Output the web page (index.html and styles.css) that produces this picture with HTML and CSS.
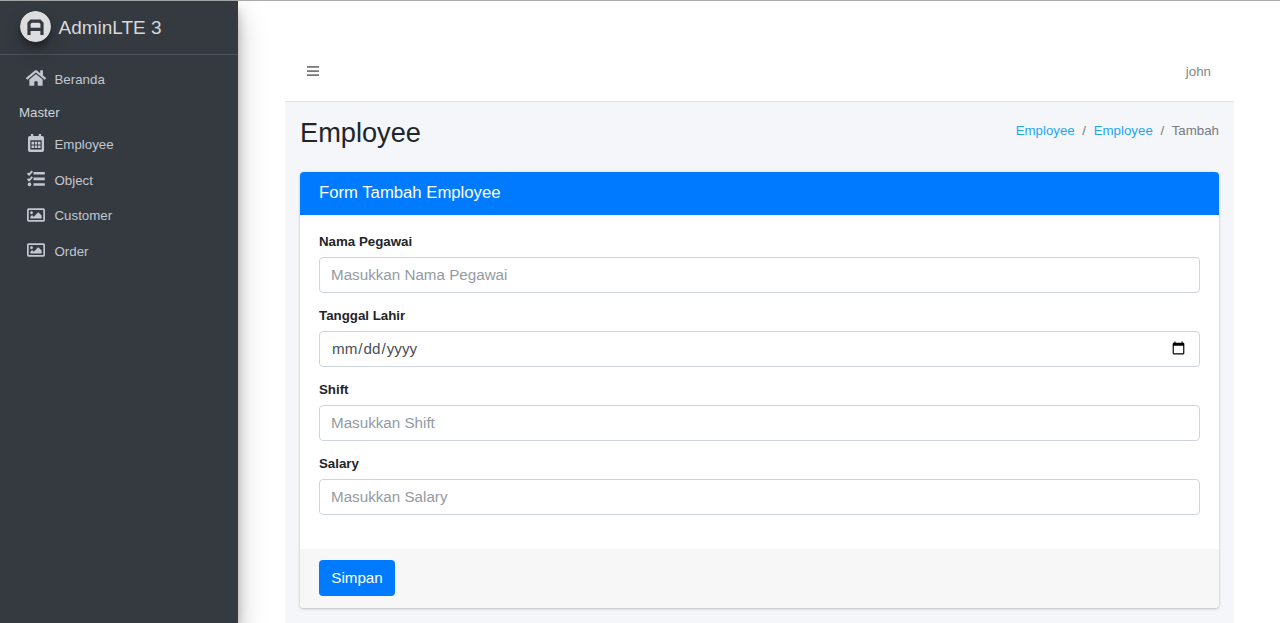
FILE: index.html
```html
<!DOCTYPE html>
<html lang="en">
<head>
<meta charset="utf-8">
<title>AdminLTE 3</title>
<link rel="stylesheet" href="styles.css">
</head>
<body>
<div class="wrapper">
  <aside class="sidebar">
    <a class="brand">
      <svg class="brand-logo" viewBox="0 0 31 31"><circle cx="15.5" cy="15.5" r="15.5" fill="#dcddde"/><path d="M9 24V12.300L11.100 10.200h8.800L22 12.300V24M9 18.300h13" fill="none" stroke="#343a40" stroke-width="3.200"/></svg>
      <span class="brand-text">AdminLTE 3</span>
    </a>
    <nav class="menu">
      <a class="item"><svg class="icon home" viewBox="0 0 576 512"><path d="M280.4 148.3 96 300.1V464a16 16 0 0 0 16 16l112-.3a16 16 0 0 0 16-16V368a16 16 0 0 1 16-16h64a16 16 0 0 1 16 16v95.6a16 16 0 0 0 16 16.1L464 480a16 16 0 0 0 16-16V300L295.7 148.3a12.2 12.2 0 0 0-15.3 0zM571.6 251.500 488 182.600V44a12 12 0 0 0-12-12h-56a12 12 0 0 0-12 12v72.600L318.500 43a48 48 0 0 0-61 0L4.300 251.500a12 12 0 0 0-1.600 16.900l25.500 31a12 12 0 0 0 16.900 1.600l235.200-193.700a12.200 12.200 0 0 1 15.300 0L530.900 301a12 12 0 0 0 16.900-1.600l25.500-31a12 12 0 0 0-1.700-16.900z"/></svg><span>Beranda</span></a>
      <div class="menu-header">Master</div>
      <a class="item"><svg class="icon date" viewBox="0 0 18 18"><path fill-rule="evenodd" d="M4 0h2.300v2h5.400V0H14v2h1.200q1.800 0 1.800 1.800v12.400q0 1.800-1.800 1.800H2.800Q1 18 1 16.200V3.800Q1 2 2.800 2H4zM3.300 6.300v9.300h11.400V6.300z"/><path d="M4.500 7.800h2.500v2.700H4.500zm3.250 0h2.500v2.700h-2.500zm3.250 0h2.500v2.700H11zM4.500 11.400h2.500v2.700H4.500zm3.250 0h2.500v2.700h-2.500zm3.250 0h2.500v2.700H11z"/></svg><span>Employee</span></a>
      <a class="item"><svg class="icon" viewBox="0 0 18 18"><path d="M6.500 2h11.300v2.600H6.500zM6.500 7.600h11.300v2.600H6.500zM6.500 13.200h11.300v2.600H6.500z"/><circle cx="2.500" cy="14.400" r="1.800"/><path d="m.5 3.300 1.600 1.400 3.200-3.500M.5 8.900l1.600 1.400 3.200-3.500" fill="none" stroke="#c2c7d0" stroke-width="1.900"/></svg><span>Object</span></a>
      <a class="item"><svg class="icon photo" viewBox="0 0 512 512"><path d="M464 64H48a48 48 0 0 0-48 48v288a48 48 0 0 0 48 48h416a48 48 0 0 0 48-48V112a48 48 0 0 0-48-48zm-6 336H54a6 6 0 0 1-6-6V118a6 6 0 0 1 6-6h404a6 6 0 0 1 6 6v276a6 6 0 0 1-6 6zM128 152a40 40 0 1 0 0 80 40 40 0 0 0 0-80zM96 352h320v-80l-87.500-87.500a12 12 0 0 0-17 0L192 304l-39.500-39.500a12 12 0 0 0-17 0L96 304z"/></svg><span>Customer</span></a>
      <a class="item"><svg class="icon photo" viewBox="0 0 512 512"><path d="M464 64H48a48 48 0 0 0-48 48v288a48 48 0 0 0 48 48h416a48 48 0 0 0 48-48V112a48 48 0 0 0-48-48zm-6 336H54a6 6 0 0 1-6-6V118a6 6 0 0 1 6-6h404a6 6 0 0 1 6 6v276a6 6 0 0 1-6 6zM128 152a40 40 0 1 0 0 80 40 40 0 0 0 0-80zM96 352h320v-80l-87.500-87.500a12 12 0 0 0-17 0L192 304l-39.500-39.500a12 12 0 0 0-17 0L96 304z"/></svg><span>Order</span></a>
    </nav>
  </aside>
  <main class="main">
    <header class="navbar">
      <svg class="bars" viewBox="0 0 12 10"><path d="M0 0h12v1.700H0zM0 4.200h12v1.700H0zM0 8.300h12V10H0z"/></svg>
      <span>john</span>
    </header>
    <section class="content">
      <div class="page-head">
        <h1>Employee</h1>
        <div class="breadcrumb"><a>Employee</a><i>/</i><a>Employee</a><i>/</i><span>Tambah</span></div>
      </div>
      <form class="card">
        <div class="card-header">Form Tambah Employee</div>
        <div class="card-body">
          <div class="group"><label for="nama">Nama Pegawai</label><input id="nama" type="text" placeholder="Masukkan Nama Pegawai"></div>
          <div class="group"><label for="tanggal">Tanggal Lahir</label><input id="tanggal" type="date"></div>
          <div class="group"><label for="shift">Shift</label><input id="shift" type="text" placeholder="Masukkan Shift"></div>
          <div class="group"><label for="salary">Salary</label><input id="salary" type="text" placeholder="Masukkan Salary"></div>
        </div>
        <div class="card-footer"><button type="button">Simpan</button></div>
      </form>
    </section>
  </main>
</div>
</body>
</html>
```
FILE: styles.css
```css
* { box-sizing: border-box; }
body {
  margin: 0;
  height: 623px;
  overflow: hidden;
  background: #fff;
  color: #212529;
  font: 13.3px/20px "Liberation Sans", Arial, sans-serif;
}
.wrapper { display: flex; height: 623px; border-top: 1px solid #a9abad; }
.sidebar {
  width: 237.5px;
  flex: none;
  background: #343a40;
  color: #c2c7d0;
  box-shadow: 0 13px 26px rgba(0,0,0,.25), 0 9px 9px rgba(0,0,0,.22);
}
.brand {
  display: flex;
  align-items: center;
  gap: 7.5px;
  height: 54px;
  padding: 0 0 4px 20px;
  border-bottom: 1px solid #4b545c;
  color: #d6d8d9;
  font-size: 19px;
}
.brand-logo {
  width: 31px;
  height: 31px;
  margin-top: 1px;
  border-radius: 50%;
  box-shadow: 0 9px 18px rgba(0,0,0,.19), 0 5px 5px rgba(0,0,0,.23);
}
.brand-text { padding-top: 4px; }
.menu { padding-top: 7px; }
.item {
  display: flex;
  align-items: center;
  gap: 9.5px;
  height: 35.4px;
  padding-left: 27px;
}
.item span { padding-top: 1px; }
.icon { width: 18px; height: 18px; margin-top: -2px; fill: #c2c7d0; }
.home { width: 20px; margin: -3px -1px 0; }
.date { margin-top: -3px; }
.photo { margin-top: -2px; }
.menu-header { height: 29.8px; padding: 0 19px; line-height: 32px; color: #d0d4db; }
.main { width: 949px; margin-left: 47.5px; display: flex; flex-direction: column; }
.navbar {
  display: flex;
  align-items: center;
  justify-content: space-between;
  height: 101px;
  padding: 41px 23px 0 22px;
  border-bottom: 1px solid #dee2e6;
  color: #848688;
}
.navbar span { padding-top: 1px; }
.bars { width: 12px; height: 10px; margin-top: -2px; fill: #777; }
.content { flex: 1; padding: 0 15px; background: #f4f6f9; }
.page-head { display: flex; justify-content: space-between; height: 69.5px; padding-top: 14px; }
h1 { margin: 0; font-size: 27.2px; font-weight: 400; line-height: 34px; }
.breadcrumb { display: flex; gap: 7.6px; padding-top: 5px; color: #747b81; }
.breadcrumb a { color: #1fa8f0; }
.breadcrumb i { font-style: normal; }
.card {
  height: 436.5px;
  border-radius: 4px;
  background: #fff;
  box-shadow: 0 0 1px rgba(0,0,0,.15), 0 1px 3px rgba(0,0,0,.22);
  overflow: hidden;
}
.card-header {
  height: 43.5px;
  padding: 0 19px;
  background: #007bff;
  color: #fff;
  font-size: 16.7px;
  line-height: 42px;
}
.card-body { height: 334px; padding: 17px 19px 0; }
.group { height: 74px; }
label { display: block; height: 25px; font-weight: 700; }
input {
  display: block;
  width: 100%;
  height: 36px;
  padding: 0 11px 2px;
  border: 1px solid #ced4da;
  border-radius: 4px;
  background: #fff;
  color: #495057;
  font: 15.2px "Liberation Sans", Arial, sans-serif;
}
input::placeholder { color: #939ba2; opacity: 1; }
input::-webkit-calendar-picker-indicator { margin-top: 2px; }
.card-footer { height: 59px; padding: 11.4px 19px; background: #f7f7f7; }
button {
  display: block;
  width: 76px;
  height: 36px;
  padding: 0 0 2px;
  border: 0;
  border-radius: 4px;
  background: #007bff;
  color: #fff;
  font: 15.2px "Liberation Sans", Arial, sans-serif;
}
```
